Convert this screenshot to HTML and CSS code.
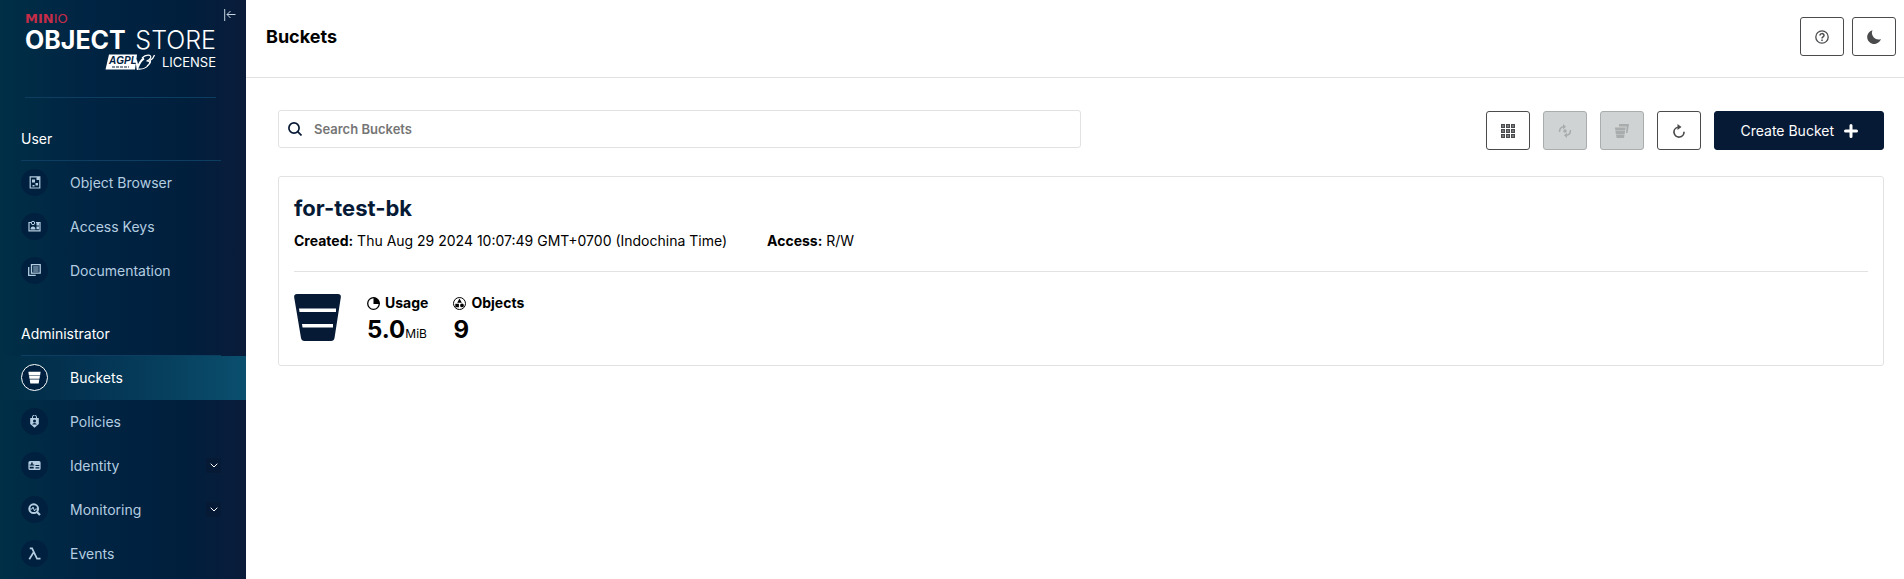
FILE: index.html
```html
<!DOCTYPE html>
<html lang="en">
<head>
<meta charset="utf-8">
<title>Buckets</title>
<link rel="stylesheet" href="styles.css">
</head>
<body>
<div class="app">
  <aside class="sidebar">
    <div class="brand">
      <button class="collapse" type="button" aria-label="Collapse menu">
        <svg width="12" height="12" viewBox="0 0 12 12" fill="none" stroke="currentColor" stroke-width="1"><path d="M.7 0v12M11.5 5.500H3M6.500 2L3 5.500 6.500 9"/></svg>
      </button>
      <div class="logo">
        <div class="logo-top"><b>MIN</b>IO</div>
        <div class="logo-main"><b>OBJECT</b><span>STORE</span></div>
        <div class="logo-sub">
          <svg class="agpl" width="50" height="16" viewBox="0 0 50 16">
            <path d="M4 .5H32L30 15.500H.5z" fill="#fff"/>
            <text x="4" y="10" font-family="Liberation Sans" font-size="10" font-weight="700" font-style="italic" fill="#00213f">AGPL</text>
            <path d="M7 13h17" stroke="#00213f" stroke-width="1.200" stroke-dasharray="3 1"/>
            <path d="M30 5c2 2 2 6 2.500 9C34 10 36 6 39 4.500" fill="none" stroke="#fff" stroke-width="2"/><path d="M37 4c4-4 10-3.500 8.500 0-.5 1.500-2 2.500-4 3 3.500 0 4 1.500 2 4-2.500 3-7 4.500-11 4M42 12c3-2 4-4 3-5.500C47.500 5 49 3 49.500 1" fill="none" stroke="#fff" stroke-width="1.200"/>
          </svg>
          <span>LICENSE</span>
        </div>
      </div>
    </div>
    <nav class="menu">
      <h2 class="group">User</h2>
      <a class="item" href="#"><span class="icon"><svg width="12" height="13" viewBox="0 0 12 13"><path d="M1.200.800h9.600v11.200H1.200z" fill="none" stroke="currentColor" stroke-width="1.200"/><path d="M3 3.500h3v3H3zM6.500 7h2.500v2.500H6.500zM3.500 9h2v1.500h-2zM7.500 1h3v3h-3z" fill="currentColor"/></svg></span>Object Browser</a>
      <a class="item" href="#"><span class="icon"><svg width="13" height="12" viewBox="0 0 13 12"><path d="M3 2.500H1v8.300h11V2.500H8" fill="none" stroke="currentColor" stroke-width="1.200"/><circle cx="5" cy="3" r="1.700" fill="none" stroke="currentColor"/><path d="M2.500 9.500c0-2 1-3 2.500-3s2.500 1 2.500 3zM8.500 3h2.500v2.500H8.500zM8.500 6.500h2.500v2.800H8.500z" fill="currentColor"/></svg></span>Access Keys</a>
      <a class="item" href="#"><span class="icon"><svg width="13" height="12" viewBox="0 0 13 12" fill="none" stroke="currentColor"><path d="M3.500.700h8.700v8.500H3.500zM.7 3v8.400h7" stroke-width="1.300"/><path d="M5.200 3h5.400M5.200 5h5.400M5.200 7h5.400"/></svg></span>Documentation</a>
      <h2 class="group">Administrator</h2>
      <a class="item active" href="#" aria-current="page"><span class="icon"><svg width="13" height="13" viewBox="0 0 13 13"><path d="M.4.700h12.200L12.100 4.500H.9zM1.100 5h10.800l-.4 2.800H1.500zM1.700 8.400h9.600L10.700 12.400H2.300z" fill="currentColor"/></svg></span>Buckets</a>
      <a class="item" href="#"><span class="icon"><svg width="11" height="13" viewBox="0 0 11 13"><path d="M3.500 3V2a2 2 0 0 1 4 0v1" fill="none" stroke="currentColor"/><path fill-rule="evenodd" d="M1.200 3h8.600v6L5.500 12.700 1.200 9zM5.500 4.400a1.500 1.500 0 1 0 0 3 1.500 1.500 0 1 0 0-3M3.200 9.600h4.600Q7.600 8 5.500 8T3.200 9.600" fill="currentColor"/></svg></span>Policies</a>
      <a class="item" href="#"><span class="icon"><svg width="13" height="11" viewBox="0 0 13 11"><path fill-rule="evenodd" d="M2 1h9q1.600 0 1.600 1.500v6q0 1.500-1.600 1.500H2Q.4 10 .4 8.500v-6Q.4 1 2 1M3.200 2.500v2H1.600v1h4.600v-1H4.700v-2zM1.700 6.800V8.500h4V6.800zM7.500 5v1.100h3.800V5zM7.500 7.300v1.100h3.800V7.300z" fill="currentColor"/></svg></span>Identity<span class="chev"><svg width="8" height="5" viewBox="0 0 8 5" fill="none" stroke="currentColor"><path d="M.7.700L4 4 7.300.700"/></svg></span></a>
      <a class="item" href="#"><span class="icon"><svg width="13" height="13" viewBox="0 0 13 13"><circle cx="5.700" cy="5.700" r="4.400" fill="none" stroke="currentColor" stroke-width="2"/><path d="M8.500 8.500l3.500 3.500" stroke="currentColor" stroke-width="2.200"/><path d="M2 6h2l1-2 1.500 4L7.500 6h2" fill="none" stroke="currentColor"/></svg></span>Monitoring<span class="chev"><svg width="8" height="5" viewBox="0 0 8 5" fill="none" stroke="currentColor"><path d="M.7.700L4 4 7.300.700"/></svg></span></a>
      <a class="item" href="#"><span class="icon"><svg width="13" height="13" viewBox="0 0 13 13" fill="none" stroke="currentColor" stroke-width="1.700"><path d="M1.800 1.300h2.300L9 11.600h3.500M5.800 5L1.300 12.300"/></svg></span>Events</a>
    </nav>
  </aside>
  <main class="main">
    <header class="topbar">
      <h1>Buckets</h1>
      <div class="top-actions">
        <button class="btn" type="button" aria-label="Help"><svg width="14" height="14" viewBox="0 0 14 14" fill="none" stroke="currentColor"><circle cx="7" cy="7" r="6.200" stroke-width="1.300"/><path d="M5 5.600C5 3 9 3 9 5.400 9 7 7 6.800 7 8.600M7 9.600v1.400" stroke-width="1.500"/></svg></button>
        <button class="btn" type="button" aria-label="Dark mode"><svg width="14" height="14" viewBox="0 0 14 14"><path d="M5.500.200A7 7 0 1 0 13.900 9 6.600 6.600 0 0 1 5.500.200z" fill="currentColor"/></svg></button>
      </div>
    </header>
    <div class="content">
      <div class="toolbar">
        <label class="search">
          <svg width="14" height="14" viewBox="0 0 14 14" fill="none" stroke="currentColor" stroke-width="1.700"><circle cx="6" cy="6" r="5.100"/><path d="M9.700 9.700l3.800 3.800"/></svg>
          <input type="text" placeholder="Search Buckets" aria-label="Search Buckets">
        </label>
        <div class="actions">
          <button class="btn" type="button" aria-label="Grid view"><svg width="14" height="14" viewBox="0 0 14 14"><path d="M0 0h14v14H0z" fill="currentColor"/><path d="M4.500 0v14M9.500 0v14M0 4.500h14M0 9.500h14" stroke="#fff"/><path d="M1.500 1.500h1v1h-1zM6.500 1.500h1v1h-1zM11.500 1.500h1v1h-1zM1.500 6.500h1v1h-1zM6.500 6.500h1v1h-1zM11.500 6.500h1v1h-1zM1.500 11.500h1v1h-1zM6.500 11.500h1v1h-1zM11.500 11.500h1v1h-1z" fill="#fff"/></svg></button>
          <button class="btn" type="button" disabled aria-label="Set lifecycle"><svg width="14" height="14" viewBox="0 0 14 14"><circle cx="7" cy="7" r="1.700" fill="currentColor"/><path d="M1.500 8C1.500 4.800 3 2.800 5.800 2.800M12.500 6c0 3.200-1.500 5.200-4.300 5.200" fill="none" stroke="currentColor" stroke-width="1.500"/><path d="M5 0l3 2.800L5 5.300zM9 8.700v5.300L6 11.200z" fill="currentColor"/></svg></button>
          <button class="btn" type="button" disabled aria-label="Set replication"><svg width="14" height="14" viewBox="0 0 14 14"><path d="M4 0h10l-1.500 9H11l.6-6.500H4zM0 3.500h10.600L10.200 6.500H.3zM.5 7h9.600l-.4 3H.8zM1 10.500h8.500L9 14H1.600z" fill="currentColor"/></svg></button>
          <button class="btn" type="button" aria-label="Refresh"><svg width="14" height="14" viewBox="0 0 14 14"><path d="M5.800 3.200a5 5 0 1 0 6.200 4.600" fill="none" stroke="currentColor" stroke-width="1.700"/><path d="M5.500 0l4 3-4 3z" fill="currentColor"/></svg></button>
          <button class="btn primary" type="button">Create Bucket<svg width="14" height="14" viewBox="0 0 14 14"><path d="M7 1.500v11M1.500 7h11" stroke="currentColor" stroke-width="3" stroke-linecap="round"/></svg></button>
        </div>
      </div>
      <article class="card">
        <h2 class="name">for-test-bk</h2>
        <div class="meta">
          <span><b>Created:</b> Thu Aug 29 2024 10:07:49 GMT+0700 (Indochina Time)</span>
          <span><b>Access:</b> R/W</span>
        </div>
        <div class="stats">
          <svg class="bucket" width="47" height="47" viewBox="0 0 47 47"><path d="M3 0h41q3.300 0 2.800 3.500L40.500 44q-.5 3-3.500 3H10.500q-3 0-3.500-3L.2 3.500Q-.3 0 3 0z" fill="#071a35"/><path d="M5 14.500h37v3.500H5.500zM8 30h31v3.500H8.500z" fill="#fff"/></svg>
          <div class="stat">
            <div class="stat-label"><svg width="13" height="13" viewBox="0 0 13 13"><circle cx="6.500" cy="6.500" r="5.800" fill="none" stroke="currentColor" stroke-width="1.300"/><path d="M6.500.500A6 6 0 0 1 12.500 7h-6z" fill="currentColor"/></svg>Usage</div>
            <div class="stat-value">5.0<small>MiB</small></div>
          </div>
          <div class="stat">
            <div class="stat-label"><svg width="13" height="13" viewBox="0 0 13 13"><circle cx="6.500" cy="6.500" r="6" fill="none" stroke="currentColor"/><path d="M6.500 1.500l2.300 4.300H4.200zM5.900 6.700v3.600H2.300V6.700zM9 6.500A1.900 1.900 0 1 1 9 10.300 1.900 1.900 0 1 1 9 6.500z" fill="currentColor"/></svg>Objects</div>
            <div class="stat-value">9</div>
          </div>
        </div>
      </article>
    </div>
  </main>
</div>
</body>
</html>
```
FILE: styles.css
```css
* { box-sizing: border-box; }
body { margin: 0; font-family: Inter, "Liberation Sans", sans-serif; font-size: 14px; color: #000; background: #fff; }
h1, h2 { margin: 0; }
svg { display: block; flex: none; }
button { font: inherit; cursor: pointer; }

.app { display: flex; height: 100vh; overflow: hidden; }
.sidebar { flex: none; width: 246px; overflow: hidden; color: #fff; background: linear-gradient(90deg, #002f46 0%, #002443 35%, #001f3d 75%, #0a1c3a 100%); }
.brand { position: relative; margin: 0 30px 0 25px; padding-top: 12px; height: 98px; border-bottom: 1px solid #0d3d60; }
.collapse { position: absolute; top: 9px; right: -20px; padding: 0; border: 0; background: none; color: #c3d3e0; }
.logo { line-height: 1; }
.logo-top { font-family: "DejaVu Sans", sans-serif; font-size: 13px; line-height: 14px; color: #c72c48; }
.logo-main { display: flex; justify-content: space-between; font-size: 25px; line-height: 28px; }
.logo-main span { font-weight: 300; }
.logo-sub { display: flex; justify-content: flex-end; align-items: center; gap: 7px; font-size: 13px; line-height: 16px; }

.menu { display: flex; flex-direction: column; padding-top: 20px; }
.group { margin: 0 25px 0 21px; height: 43px; line-height: 42px; font-size: 14px; font-weight: 400; border-bottom: 1px solid #0d3d60; }
.item + .group { margin-top: 20px; }
.item { display: flex; align-items: center; gap: 22px; height: 44px; padding: 0 25px 2px 21px; color: #b4cde0; text-decoration: none; }
.icon { display: grid; place-items: center; width: 27px; height: 27px; border-radius: 50%; background: #00203f; }
.active { color: #fff; background: linear-gradient(90deg, transparent 0%, #0a4f6e 100%); }
.active .icon { border: 1px solid #fff; }
.chev { display: grid; place-items: center; width: 15px; height: 15px; margin-left: auto; background: #071a35; color: #fff; }

.main { flex: 1; min-width: 0; }
.topbar { display: flex; justify-content: space-between; padding: 17px 8px 0 20px; height: 78px; border-bottom: 1px solid #e2e2e2; }
.topbar h1 { font-size: 18px; line-height: 40px; font-weight: 700; }
.top-actions { display: flex; gap: 8px; }
.btn { display: flex; align-items: center; justify-content: center; width: 44px; height: 39px; padding: 0; border: 1px solid #4a4b4d; border-radius: 3px; background: #fff; color: #4a4b4d; }
.btn:disabled { background: #d0d3d3; border-color: #aaadad; color: #a9acac; }
.btn.primary { width: auto; gap: 10px; padding: 0 25px; background: #071a35; border-color: #071a35; color: #fff; }

.content { padding: 32px 20px 0 32px; }
.toolbar { display: flex; justify-content: space-between; align-items: flex-start; }
.search { display: flex; align-items: center; gap: 12px; width: 50%; height: 38px; padding: 0 9px; border: 1px solid #e2e2e2; border-radius: 3px; color: #071a35; }
.search input { flex: 1; min-width: 0; padding: 0; border: 0; outline: 0; background: none; font: 600 13px Inter, sans-serif; color: #000; }
.search input::placeholder { color: #757575; opacity: 1; }
.actions { display: flex; gap: 13px; padding-top: 1px; }

.card { margin-top: 26px; padding: 15px 15px 13px; border: 1px solid #e2e2e2; border-radius: 3px; }
.name { font-size: 22px; line-height: 32px; font-weight: 700; color: #071a35; }
.meta { display: flex; gap: 40px; padding: 6px 0 19px; line-height: 22px; border-bottom: 1px solid #e2e2e2; }
.stats { display: flex; gap: 25px; padding-top: 22px; }
.stat-label { display: flex; align-items: center; gap: 5px; line-height: 18px; font-weight: 700; }
.stat-value { font-size: 24px; line-height: 36px; font-weight: 700; }
.stat-value small { font-size: 12px; font-weight: 400; }
.bucket { margin-right: 1px; }
```
